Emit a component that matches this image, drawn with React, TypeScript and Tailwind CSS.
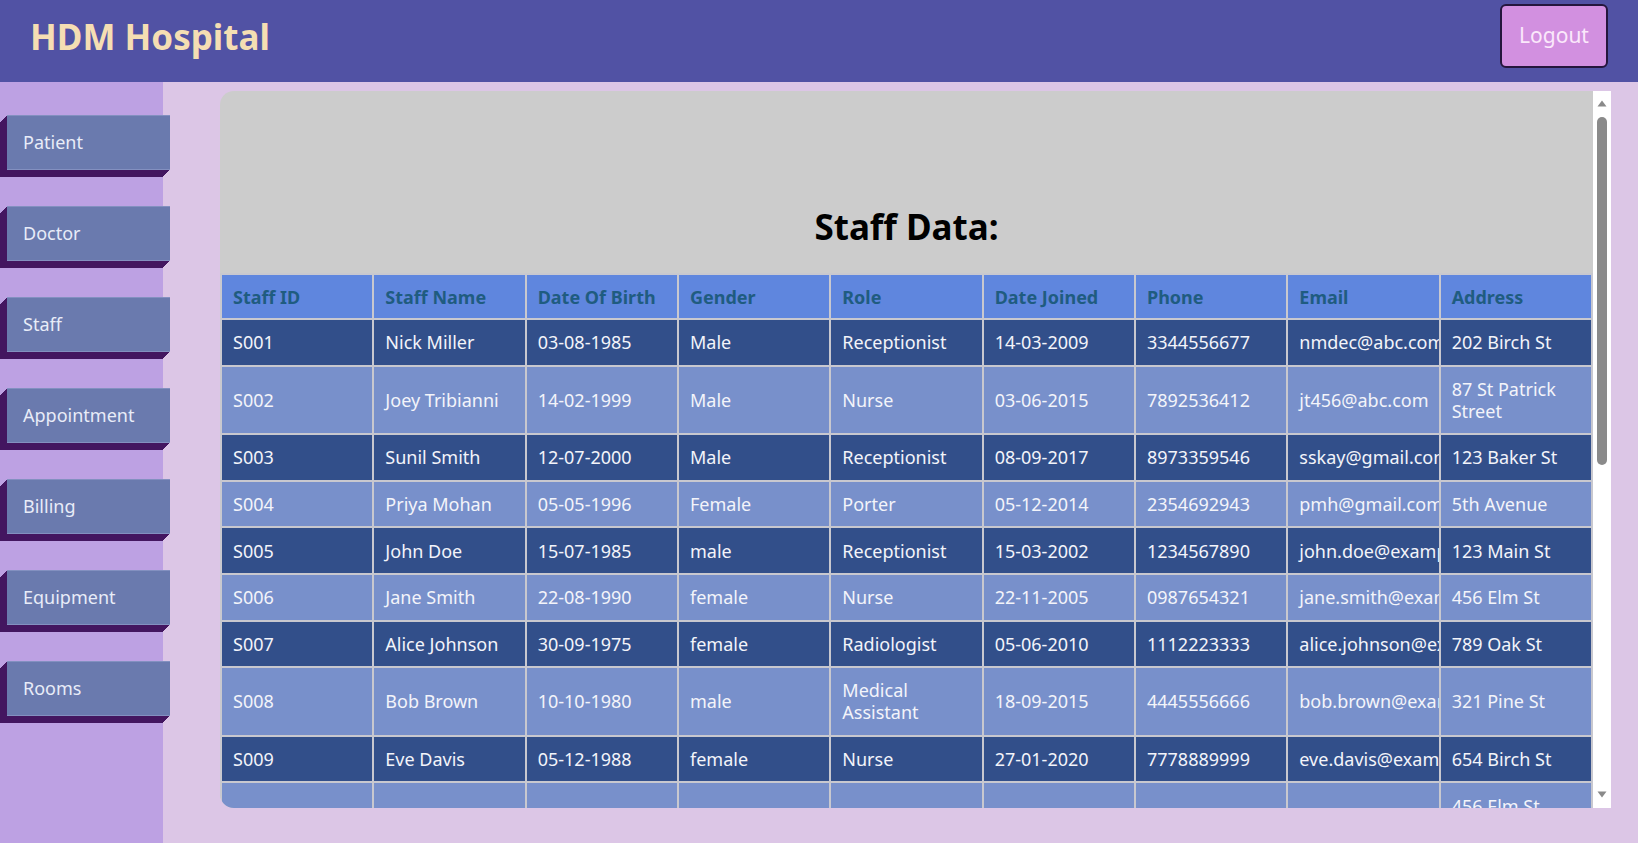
import React from "react";

const rows: string[][] = [
  ["S001", "Nick Miller", "03-08-1985", "Male", "Receptionist", "14-03-2009", "3344556677", "nmdec@abc.com", "202 Birch St"],
  ["S002", "Joey Tribianni", "14-02-1999", "Male", "Nurse", "03-06-2015", "7892536412", "jt456@abc.com", "87 St Patrick Street"],
  ["S003", "Sunil Smith", "12-07-2000", "Male", "Receptionist", "08-09-2017", "8973359546", "sskay@gmail.com", "123 Baker St"],
  ["S004", "Priya Mohan", "05-05-1996", "Female", "Porter", "05-12-2014", "2354692943", "pmh@gmail.com", "5th Avenue"],
  ["S005", "John Doe", "15-07-1985", "male", "Receptionist", "15-03-2002", "1234567890", "john.doe@example.com", "123 Main St"],
  ["S006", "Jane Smith", "22-08-1990", "female", "Nurse", "22-11-2005", "0987654321", "jane.smith@example.com", "456 Elm St"],
  ["S007", "Alice Johnson", "30-09-1975", "female", "Radiologist", "05-06-2010", "1112223333", "alice.johnson@example.com", "789 Oak St"],
  ["S008", "Bob Brown", "10-10-1980", "male", "Medical Assistant", "18-09-2015", "4445556666", "bob.brown@example.com", "321 Pine St"],
  ["S009", "Eve Davis", "05-12-1988", "female", "Nurse", "27-01-2020", "7778889999", "eve.davis@example.com", "654 Birch St"],
  ["S010", "Jane Smith", "22-08-1990", "female", "Nurse", "22-11-2005", "0987654321", "jane.smith@example.com", "456 Elm St Springfield"],
  ["S011", "Alice Johnson", "30-09-1975", "female", "Radiologist", "05-06-2010", "1112223333", "alice.johnson@example.com", "789 Oak St"],
  ["S012", "Bob Brown", "10-10-1980", "male", "Medical Assistant", "18-09-2015", "4445556666", "bob.brown@example.com", "321 Pine St"],
  ["S013", "Eve Davis", "05-12-1988", "female", "Nurse", "27-01-2020", "7778889999", "eve.davis@example.com", "654 Birch St"],
];

const headers = ["Staff ID", "Staff Name", "Date Of Birth", "Gender", "Role", "Date Joined", "Phone", "Email", "Address"];

const navItems = ["Patient", "Doctor", "Staff", "Appointment", "Billing", "Equipment", "Rooms"];

export default function App() {
  return (
    <div
      className="w-[1638px] h-[843px] overflow-hidden flex flex-col bg-[#dcc6e6]"
      style={{ fontFamily: '"Noto Sans", "Open Sans", sans-serif' }}
    >
      <header className="h-[82px] shrink-0 bg-[#5152a4] flex items-start justify-between pl-[30px] pr-[30px]">
        <h1 className="mt-[15px] text-[35px] leading-[44px] font-bold text-[#f5deb3]">HDM Hospital</h1>
        <button className="mt-[4px] w-[108px] h-[64px] rounded-[6px] border-2 border-[#25163d] bg-[#d290e0] text-[21px] text-[#fbe8fb]">
          Logout
        </button>
      </header>
      <div className="flex flex-1 min-h-0">
        <aside className="w-[163px] shrink-0 bg-[#bda1e3] flex flex-col gap-[36px] pt-[33px]">
          {navItems.map((n) => (
            <div
              key={n}
              className="ml-[7px] w-[163px] h-[55px] shrink-0 bg-[#6a7aae] border-y border-[#8390c0] flex items-center pl-[16px] text-[18px] text-[#e8ecf8] shadow-[-1px_1px_0_#431660,-2px_2px_0_#431660,-3px_3px_0_#431660,-4px_4px_0_#431660,-5px_5px_0_#431660,-6px_6px_0_#431660,-7px_7px_0_#431660]"
            >
              {n}
            </div>
          ))}
        </aside>
        <main className="flex-1 min-w-0">
          <div className="ml-[57px] mt-[9px] w-[1391px] h-[717px] flex">
            <div className="flex-1 min-w-0 overflow-hidden rounded-l-[14px] bg-[#cccccc]">
              <div className="h-[182px] pt-[115px] text-center">
                <h2 className="text-[35px] leading-[41px] font-bold text-black">Staff Data:</h2>
              </div>
              <table className="w-full table-fixed border-collapse text-[18px] leading-[22px]">
                <thead>
                  <tr className="bg-[#5f86de]">
                    {headers.map((h) => (
                      <th
                        key={h}
                        className="border-2 border-[#c8c8cf] px-[11px] py-[10.5px] text-left font-bold text-[#1f5c80] whitespace-nowrap overflow-hidden"
                      >
                        {h}
                      </th>
                    ))}
                  </tr>
                </thead>
                <tbody>
                  {rows.map((r, i) => (
                    <tr key={r[0] + i} className={i % 2 === 0 ? "bg-[#324f8a]" : "bg-[#7890cb]"}>
                      {r.map((c, j) => (
                        <td
                          key={j}
                          className="border-2 border-[#c8c8cf] px-[11px] py-[11.3px] text-left text-[#f3f4fa] overflow-hidden align-middle"
                        >
                          {c}
                        </td>
                      ))}
                    </tr>
                  ))}
                </tbody>
              </table>
            </div>
            <div className="w-[18px] shrink-0 bg-white flex flex-col items-center pt-[9px] pb-[10px]">
              <svg width="10" height="7" viewBox="0 0 10 7">
                <path d="M5 0.5 L9.5 6.5 L0.5 6.5 Z" fill="#8a8a8a" />
              </svg>
              <div className="mt-[10px] w-[10px] h-[348px] rounded-full bg-[#8a8a8a]" />
              <div className="flex-1" />
              <svg width="10" height="7" viewBox="0 0 10 7">
                <path d="M0.5 0.5 L9.5 0.5 L5 6.5 Z" fill="#8a8a8a" />
              </svg>
            </div>
          </div>
        </main>
      </div>
    </div>
  );
}
